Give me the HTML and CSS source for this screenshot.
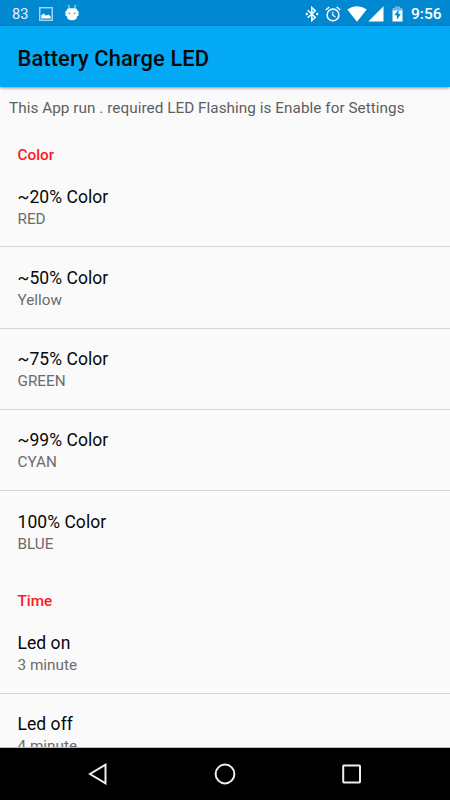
FILE: index.html
```html
<!DOCTYPE html>
<html lang="en">
<head>
<meta charset="utf-8">
<title>Battery Charge LED</title>
<link rel="stylesheet" href="styles.css">
</head>
<body>
<div class="screen">
  <div class="status">
    <span class="level">83</span>
    <svg class="picture" width="14" height="14" viewBox="0 0 14 14"><rect x=".75" y=".75" width="12.5" height="12.5" fill="none" stroke="#b9def4" stroke-width="1.3"/><path d="M2.3 11.5V8.3L4.7 6.5 7 8.7 9.3 7.5 11.7 9.5v2z" fill="#fff"/></svg>
    <svg class="robot" width="14" height="17" viewBox="0 0 14 17"><path d="M4.3 5 3.7.8M9.7 5l.6-4.2" stroke="#d5ebf8" stroke-width="1"/><path d="M1.7 5.5Q2.5 4.2 7 4.2T12.3 5.5V7h1.2v5h-1.2Q12 16.3 7 16.3T1.7 12H.5V7h1.2z" fill="#fff"/><circle cx="4.2" cy="9.3" r=".8" fill="#0288d1"/><circle cx="9.8" cy="9.3" r=".8" fill="#0288d1"/></svg>
    <span class="spacer"></span>
    <svg class="bluetooth" width="14" height="16" viewBox="0 0 14 16"><path d="M2.7 4.2 10.2 11.3 6.8 14.5V1.5L10.2 4.7 2.7 11.8" fill="none" stroke="#fff" stroke-width="1.5"/><path d="M.3 8 1.8 6.5 3.3 8 1.8 9.5zM10.7 8l1.5-1.5L13.7 8l-1.5 1.5z" fill="#fff"/></svg>
    <svg class="alarm" width="16" height="16" viewBox="0 0 16 16"><g fill="none" stroke="#fff"><circle cx="8" cy="8.9" r="5.9" stroke-width="1.5"/><path d="M.8 4 4.3 1M15.2 4 11.7 1" stroke-width="1.5"/><path d="M7.8 5.5v3.8l2.7 1.7" stroke-width="1.1"/></g></svg>
    <svg class="wifi" width="20" height="16" viewBox="0 0 20 16"><path d="M.3 3.5Q10-3 19.7 3.5L10 15.7z" fill="#fff"/></svg>
    <svg class="signal" width="16" height="16" viewBox="0 0 16 16"><path d="M15.5.3v15.2H.3z" fill="#fff"/></svg>
    <svg class="battery" width="11" height="16" viewBox="0 0 11 16"><path d="M.5 2H3V.5h5V2h2.5v3H.5z" fill="#67b8e3"/><path d="M.5 4.5h10v11H.5z" fill="#fff"/><path d="M6.5 3.8 2.3 9.2h2.6v4.6l4-5.8H6.5z" fill="#0288d1"/></svg>
    <span class="clock">9:56</span>
  </div>
  <header class="toolbar"><h1>Battery Charge LED</h1></header>
  <main class="content">
    <p class="notice">This App run . required LED Flashing is Enable for Settings</p>
    <h2 class="category">Color</h2>
    <ul class="list">
      <li><span class="name">~20% Color</span><span class="value">RED</span></li>
      <li><span class="name">~50% Color</span><span class="value">Yellow</span></li>
      <li><span class="name">~75% Color</span><span class="value">GREEN</span></li>
      <li><span class="name">~99% Color</span><span class="value">CYAN</span></li>
      <li><span class="name">100% Color</span><span class="value">BLUE</span></li>
    </ul>
    <h2 class="category time">Time</h2>
    <ul class="list">
      <li><span class="name">Led on</span><span class="value">3 minute</span></li>
      <li><span class="name">Led off</span><span class="value">4 minute</span></li>
    </ul>
  </main>
  <nav class="nav">
    <svg width="20" height="22" viewBox="0 0 20 22"><path d="M17.5 1.7v18.6L2 11z"/></svg>
    <svg width="22" height="22" viewBox="0 0 22 22"><circle cx="11" cy="11" r="9.4"/></svg>
    <svg width="20" height="20" viewBox="0 0 20 20"><rect x="1.2" y="1.6" width="16.8" height="16.8" rx=".6"/></svg>
  </nav>
</div>
</body>
</html>
```
FILE: styles.css
```css
* { box-sizing: border-box; }
body { margin: 0; font-family: Roboto, sans-serif; }
h1, h2, p, ul { margin: 0; padding: 0; font-weight: 400; }
.screen { width: 450px; height: 800px; display: flex; flex-direction: column; overflow: hidden; background: #fafafa; }
.status { flex: none; height: 26px; display: flex; align-items: center; padding: 1px 8px 0 12px; background: #0288d1; color: #fff; }
.status svg { flex: none; }
.level { width: 27px; font-size: 14.5px; line-height: 26px; color: #e6f3fb; padding-top: 2px; }
.robot { margin: -2px 0 0 12px; }
.spacer { flex: 1; }
.alarm { margin-left: 6px; }
.wifi { margin-left: 6px; }
.signal { margin-left: 1px; }
.battery { margin-left: 8px; }
.clock { width: 31px; margin-left: 8px; font-size: 15.5px; font-weight: 500; line-height: 26px; padding-top: 1px; white-space: nowrap; }
.toolbar { flex: none; height: 61px; display: flex; align-items: center; padding: 4px 17.5px 0; background: #03a9f4; box-shadow: 0 1px 3px rgba(0,0,0,.45); position: relative; }
.toolbar h1 { font-size: 21.9px; line-height: 26px; font-weight: 500; letter-spacing: .1px; color: #08090a; white-space: nowrap; }
.content { flex: 1; min-height: 0; overflow: hidden; border-bottom: 1px solid #bbb; }
.notice { padding: 11px 9px 0; font-size: 15.3px; line-height: 20px; letter-spacing: .04px; color: #5f5f5f; white-space: nowrap; }
.category { margin-top: 27px; padding-left: 17.5px; font-size: 15.3px; line-height: 20px; font-weight: 500; color: #ff1a1a; }
.list { list-style: none; }
.list li { height: 81.2px; display: flex; flex-direction: column; padding: 19.6px 17.5px 0; border-bottom: 1px solid #d6d6d6; }
.list li:first-child { height: 82.4px; padding-top: 20.9px; }
.list li:last-child { border-bottom: 0; }
.name { font-size: 17.5px; line-height: 23px; letter-spacing: .05px; color: #080808; }
.value { font-size: 15.3px; line-height: 21px; color: #6c6c6c; }
.time { margin-top: 19px; }
.nav { flex: none; height: 52px; display: flex; justify-content: center; align-items: center; gap: 106px; background: #000; }
.nav svg { fill: none; stroke: #eee; stroke-width: 2; }
```
